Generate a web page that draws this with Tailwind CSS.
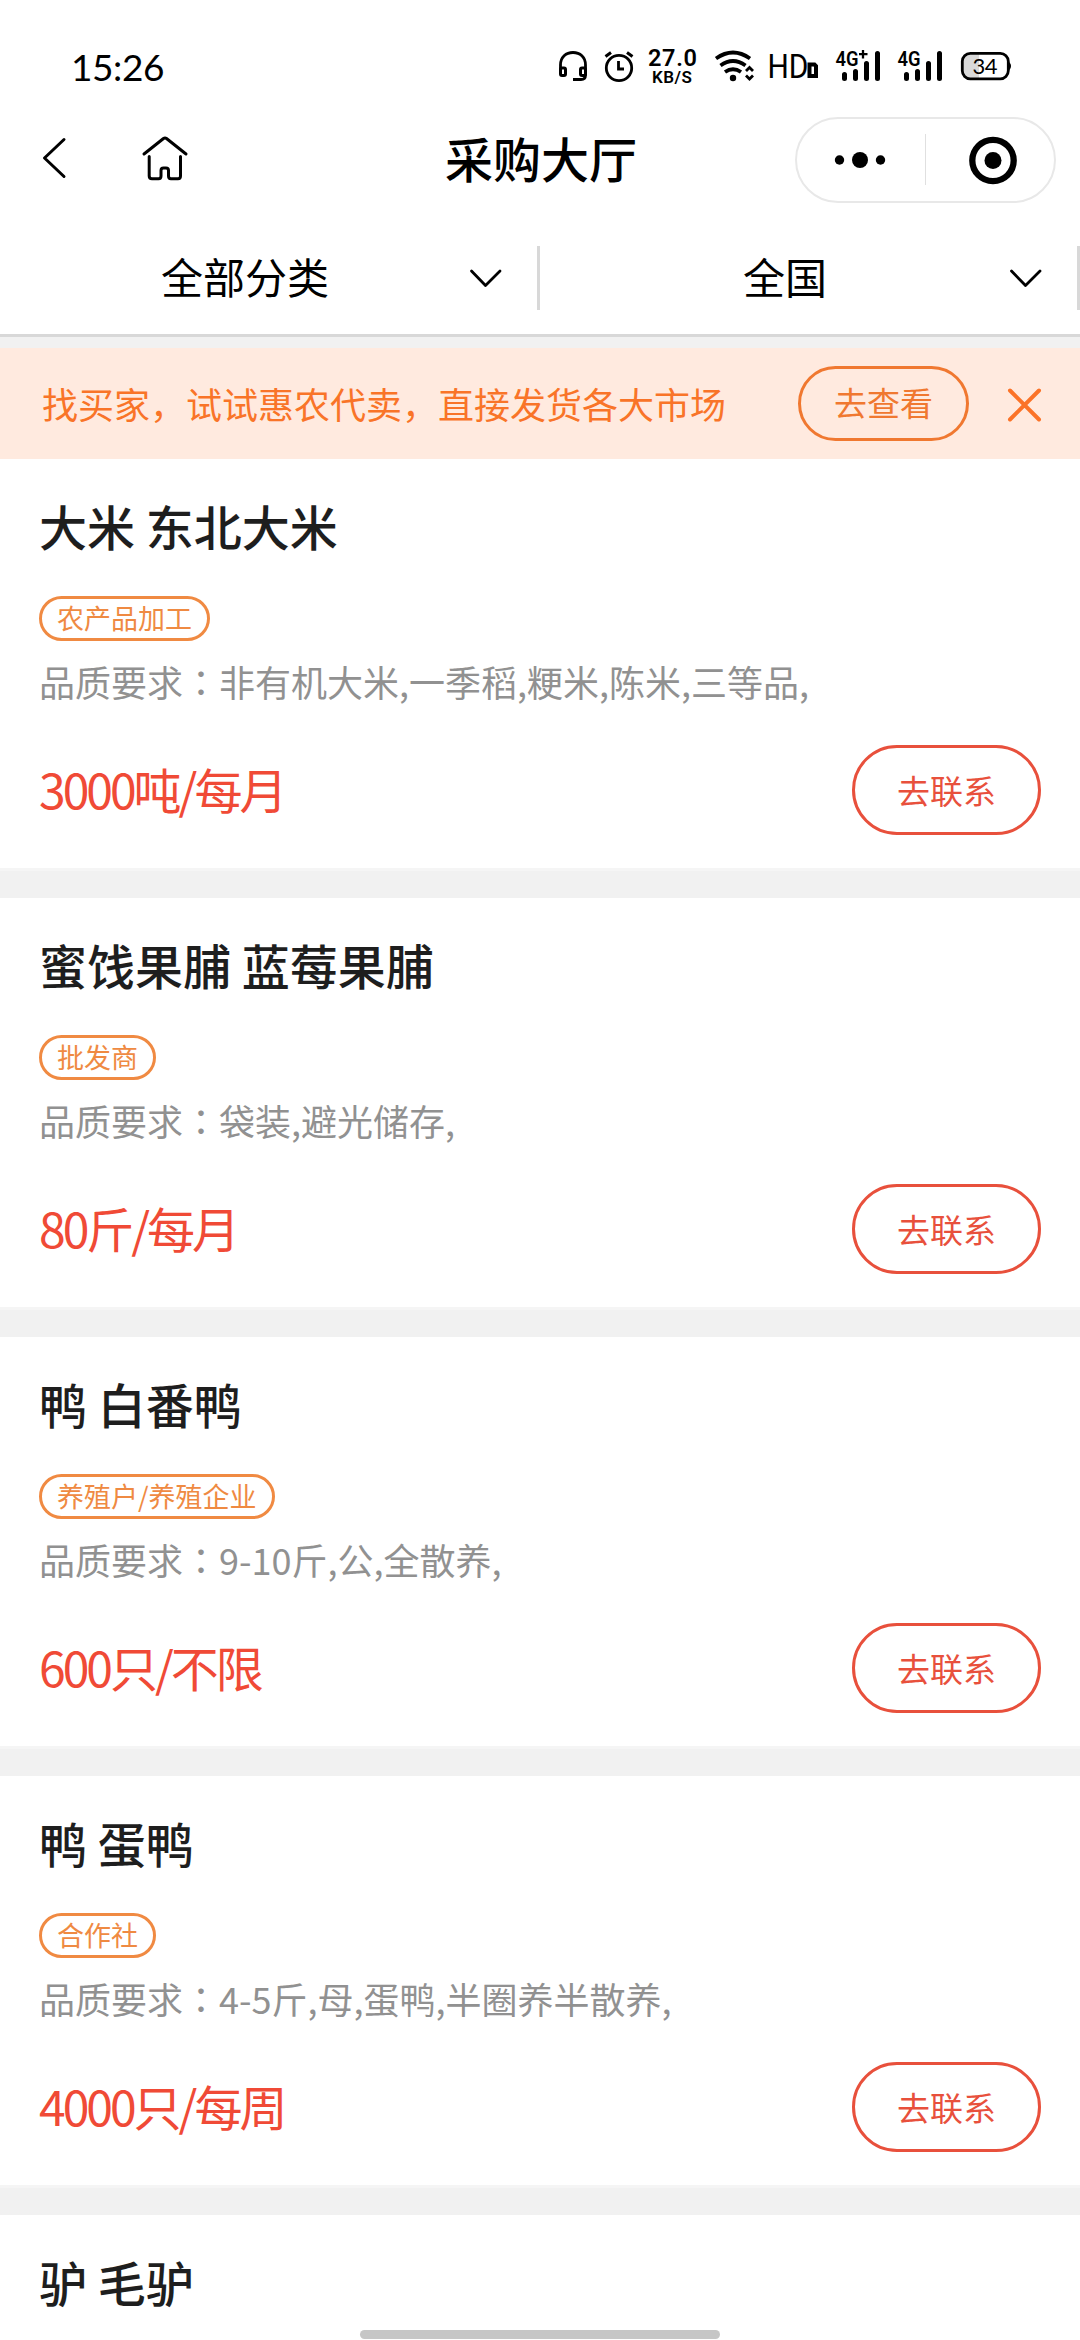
<!DOCTYPE html>
<html lang="zh-CN">
<head>
<meta charset="utf-8">
<title>采购大厅</title>
<script src="https://cdn.jsdelivr.net/npm/@tailwindcss/browser@4"></script>
</head>
<body class="bg-[#f1f1f1]">
<div class="relative w-[1080px] h-[2340px] overflow-hidden bg-[#f1f1f1] font-['Noto_Sans_CJK_SC',sans-serif] text-black">

  <!-- status bar -->
  <header class="bg-white h-[100px] flex items-start justify-between pl-[71px] pr-[68px]">
    <div class="pt-[42px] font-['Lato',sans-serif] text-[37px] leading-[50px] tracking-[-0.4px]">15:26</div>
    <svg class="mt-[40px]" width="454" height="52" viewBox="558 40 454 52" fill="none" stroke="#000">
      <path d="M560.500 72V65C560.500 57 566 52.500 573 52.500S585.500 57 585.500 65V75Q585.500 79.500 581 79.500H573" stroke-width="2.800"/>
      <rect x="560.500" y="68" width="5" height="7.500" rx="1.500" stroke-width="3"/>
      <rect x="580.500" y="68" width="5" height="7.500" rx="1.500" stroke-width="3"/>
      <circle cx="619" cy="68" r="12.700" stroke-width="2.800"/>
      <path d="M618.500 61V69H624" stroke-width="2.800"/>
      <path d="M605.500 56.500L611 52.500M632.500 56.500L627 52.500" stroke-width="3"/>
      <g fill="#000" stroke="none" font-family="Roboto">
        <text x="648" y="65.500" font-size="23.500" font-weight="600" textLength="49">27.0</text>
        <text x="652" y="83" font-size="17" font-weight="600" textLength="40">KB/S</text>
        <text x="767.500" y="78" font-size="33" font-weight="400" textLength="41" lengthAdjust="spacingAndGlyphs">HD</text>
        <text x="835.500" y="65.500" font-size="20" font-weight="600" textLength="23" lengthAdjust="spacingAndGlyphs">4G</text>
        <text x="897.500" y="65.500" font-size="20" font-weight="600" textLength="23" lengthAdjust="spacingAndGlyphs">4G</text>
      </g>
      <path d="M716 58.500Q733 46.500 750 58.500M720.500 65.500Q733 56.500 745.500 65.500M725 72Q733 66.500 741 72" stroke-width="3.800"/>
      <circle cx="733" cy="78" r="3.200" fill="#000" stroke="none"/>
      <path d="M746 71L749.500 67.500L753 71M746 75.500L749.500 79L753 75.500" stroke-width="2.800"/>
      <path d="M809.500 64.500H814.500L816 66V76H809.500Z" stroke-width="4"/>
      <path d="M863 50V58.500M859 54.200H867.500" stroke-width="2.300"/>
      <g stroke-width="5" stroke-linecap="round">
        <path d="M844.500 74.500V78.500M855.500 71.500V78.500M866.500 63.500V78.500M877.500 53.500V78.500"/>
        <path d="M906.500 74.500V78.500M917.500 71.500V78.500M928.500 63.500V78.500M939.500 53.500V78.500"/>
      </g>
      <path d="M979 53.500H970Q963 53.500 963 61V70Q963 78.500 970 78.500H979Z" fill="#d9d9d9" stroke="none"/>
      <rect x="962.300" y="53.300" width="46" height="25.500" rx="8" stroke-width="2.800"/>
      <path d="M1007.500 61Q1011 63 1011 66T1007.500 71.500Z" fill="#000" stroke="none"/>
      <text x="972.500" y="74" font-size="22" font-family="Lato" fill="#000" stroke="none" textLength="25">34</text>
    </svg>
  </header>

  <!-- navigation bar -->
  <nav class="bg-white h-[120px] flex items-start pl-[40px] pr-[24px]">
    <svg class="mt-[34px]" width="150" height="50" viewBox="40 134 150 50" fill="none" stroke="#000" stroke-width="3" stroke-linecap="round" stroke-linejoin="round">
      <path d="M64 139.500L44.500 158L64 176.500"/>
      <path d="M144 154L163.500 138.500Q165 137.400 166.500 138.500L186 154"/>
      <path d="M149.200 156.500V176Q149.200 178.700 152 178.700H158.500Q161 178.700 161 176V170.500Q161 168 163.500 168H166Q168.500 168 168.500 170.500V176Q168.500 178.700 171 178.700H178Q180.500 178.700 180.500 176V156.500"/>
    </svg>
    <h1 class="ml-[255px] mt-[22px] w-[194px] text-[48px] leading-[70px] font-medium whitespace-nowrap">采购大厅</h1>
    <div class="ml-auto mt-[17px] w-[261px] h-[86px] rounded-full border-2 border-[#e8e8e8] flex items-center">
      <svg width="257" height="82" viewBox="797 119 257 82">
        <circle cx="839.500" cy="160" r="4.700"/><circle cx="860" cy="160" r="8"/><circle cx="880.500" cy="160" r="4.700"/>
        <path d="M925.500 134V185" stroke="#e0e0e0"/>
        <circle cx="993" cy="160.500" r="20.700" fill="none" stroke="#000" stroke-width="6.300"/><circle cx="993" cy="160.500" r="8.500"/>
      </svg>
    </div>
  </nav>

  <!-- filters -->
  <div class="bg-white h-[117px] border-b-[3px] border-[#d8d8d8] flex pt-[26px] text-[42px] leading-[64px]">
    <div class="w-[540px] h-[64px] border-r-[3px] border-[#d8d8d8] flex items-center">
      <div class="w-[490px] -mt-[5px] text-center shrink-0">全部分类</div>
      <svg class="-ml-[23px] shrink-0" width="36" height="22" viewBox="0 0 36 22" fill="none" stroke="#000" stroke-width="2.800" stroke-linecap="round" stroke-linejoin="round"><path d="M4.500 4L18.500 18.500L33 4"/></svg>
    </div>
    <div class="w-[540px] h-[64px] border-r-[3px] border-[#d8d8d8] flex items-center">
      <div class="w-[490px] -mt-[5px] text-center shrink-0">全国</div>
      <svg class="-ml-[23px] shrink-0" width="36" height="22" viewBox="0 0 36 22" fill="none" stroke="#000" stroke-width="2.800" stroke-linecap="round" stroke-linejoin="round"><path d="M4.500 4L18.500 18.500L33 4"/></svg>
    </div>
  </div>

  <!-- promotion banner -->
  <div class="mt-[11px] h-[111px] bg-[#ffeadf] text-[#f97428] flex items-center pl-[42px]">
    <div class="w-[756px] -mt-[1px] text-[36px] leading-[52px] whitespace-nowrap">找买家，试试惠农代卖，直接发货各大市场</div>
    <div class="w-[171px] h-[75px] rounded-full border-[3px] border-[#f07830] text-[#f07830] text-[33px] leading-[67px] text-center">去查看</div>
    <svg class="ml-[35px]" width="40" height="40" viewBox="0 0 40 40" stroke="#fb7328" stroke-width="4" stroke-linecap="round"><path d="M6 6.500L35 35.500M35 6.500L6 35.500"/></svg>
  </div>

  <!-- purchase list -->
  <main>
    <section class="h-[439px] bg-white border-b-[27px] border-[#f1f1f1] shadow-[inset_0_-3px_0_#f5f5f5] px-[39px] pt-[31px]">
      <h2 class="text-[48px] leading-[70px] font-medium text-[#1e1e1e]">大米 东北大米</h2>
      <div class="mt-[36px] w-fit h-[45px] px-[15px] rounded-full border-[3px] border-[#f08a42] text-[#ef8a42] text-[27px] leading-[38px]">农产品加工</div>
      <p class="mt-[14px] text-[36px] leading-[52px] text-[#919191]">品质要求<span lang="zh-TW" class="font-['Noto_Sans_CJK_TC']">：</span>非有机大米,一季稻,粳米,陈米,三等品,</p>
      <div class="mt-[38px] flex justify-between">
        <div class="text-[48px] leading-[86px] tracking-[-3px] text-[#f04a36]">3000吨/每月</div>
        <div class="w-[189px] h-[90px] rounded-full border-[3px] border-[#e8503c] text-[#e8503c] text-[33px] leading-[85px] text-center">去联系</div>
      </div>
    </section>
    <section class="h-[439px] bg-white border-b-[27px] border-[#f1f1f1] shadow-[inset_0_-3px_0_#f5f5f5] px-[39px] pt-[31px]">
      <h2 class="text-[48px] leading-[70px] font-medium text-[#1e1e1e]">蜜饯果脯 蓝莓果脯</h2>
      <div class="mt-[36px] w-fit h-[45px] px-[15px] rounded-full border-[3px] border-[#f08a42] text-[#ef8a42] text-[27px] leading-[38px]">批发商</div>
      <p class="mt-[14px] text-[36px] leading-[52px] text-[#919191]">品质要求<span lang="zh-TW" class="font-['Noto_Sans_CJK_TC']">：</span>袋装,避光储存,</p>
      <div class="mt-[38px] flex justify-between">
        <div class="text-[48px] leading-[86px] tracking-[-3px] text-[#f04a36]">80斤/每月</div>
        <div class="w-[189px] h-[90px] rounded-full border-[3px] border-[#e8503c] text-[#e8503c] text-[33px] leading-[85px] text-center">去联系</div>
      </div>
    </section>
    <section class="h-[439px] bg-white border-b-[27px] border-[#f1f1f1] shadow-[inset_0_-3px_0_#f5f5f5] px-[39px] pt-[31px]">
      <h2 class="text-[48px] leading-[70px] font-medium text-[#1e1e1e]">鸭 白番鸭</h2>
      <div class="mt-[36px] w-fit h-[45px] px-[15px] rounded-full border-[3px] border-[#f08a42] text-[#ef8a42] text-[27px] leading-[38px]">养殖户/养殖企业</div>
      <p class="mt-[14px] text-[36px] leading-[52px] text-[#919191]">品质要求<span lang="zh-TW" class="font-['Noto_Sans_CJK_TC']">：</span>9-10斤,公,全散养,</p>
      <div class="mt-[38px] flex justify-between">
        <div class="text-[48px] leading-[86px] tracking-[-3px] text-[#f04a36]">600只/不限</div>
        <div class="w-[189px] h-[90px] rounded-full border-[3px] border-[#e8503c] text-[#e8503c] text-[33px] leading-[85px] text-center">去联系</div>
      </div>
    </section>
    <section class="h-[439px] bg-white border-b-[27px] border-[#f1f1f1] shadow-[inset_0_-3px_0_#f5f5f5] px-[39px] pt-[31px]">
      <h2 class="text-[48px] leading-[70px] font-medium text-[#1e1e1e]">鸭 蛋鸭</h2>
      <div class="mt-[36px] w-fit h-[45px] px-[15px] rounded-full border-[3px] border-[#f08a42] text-[#ef8a42] text-[27px] leading-[38px]">合作社</div>
      <p class="mt-[14px] text-[36px] leading-[52px] text-[#919191]">品质要求<span lang="zh-TW" class="font-['Noto_Sans_CJK_TC']">：</span>4-5斤,母,蛋鸭,半圈养半散养,</p>
      <div class="mt-[38px] flex justify-between">
        <div class="text-[48px] leading-[86px] tracking-[-3px] text-[#f04a36]">4000只/每周</div>
        <div class="w-[189px] h-[90px] rounded-full border-[3px] border-[#e8503c] text-[#e8503c] text-[33px] leading-[85px] text-center">去联系</div>
      </div>
    </section>
    <section class="h-[439px] bg-white px-[39px] pt-[31px]">
      <h2 class="text-[48px] leading-[70px] font-medium text-[#1e1e1e]">驴 毛驴</h2>
    </section>
  </main>

  <!-- gesture handle -->
  <div class="absolute left-[360px] top-[2330px] w-[360px] h-[9px] rounded-full bg-[#c6c6c6]"></div>
</div>
</body>
</html>
